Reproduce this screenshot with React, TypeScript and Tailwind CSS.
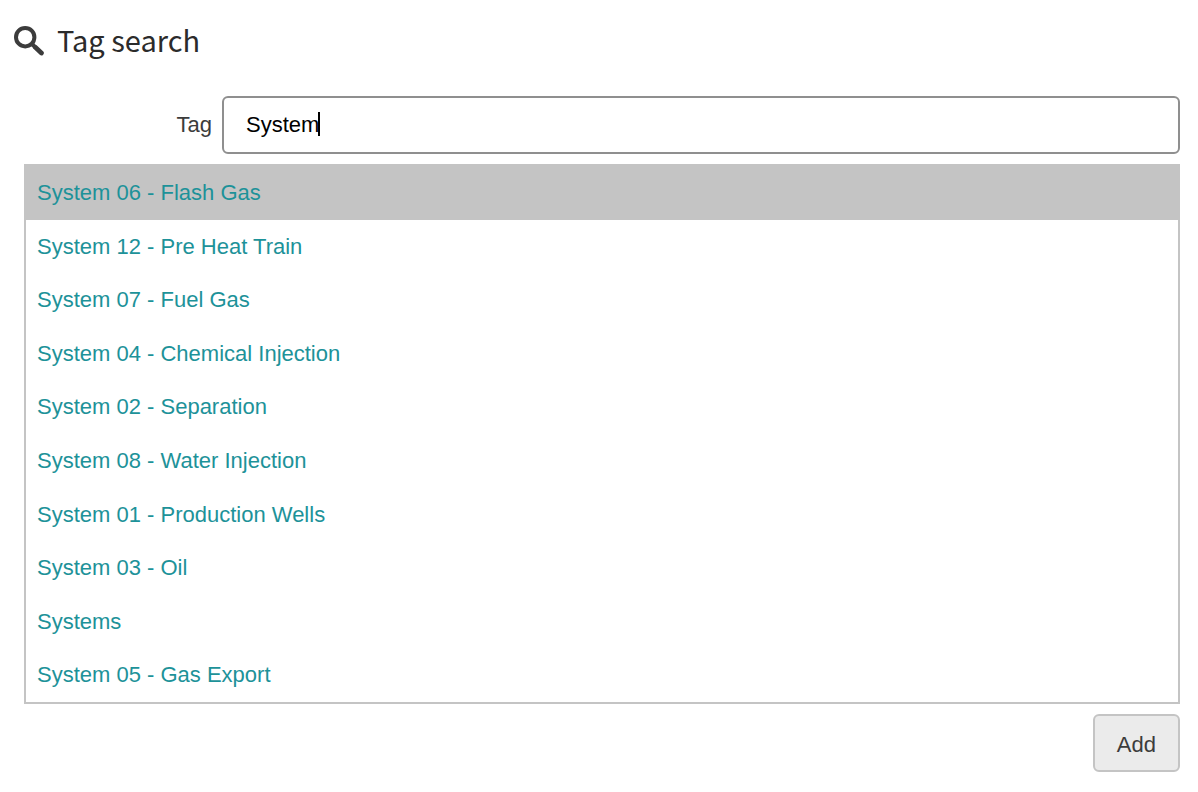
import { useState } from "react";

const suggestions = [
  "System 06 - Flash Gas",
  "System 12 - Pre Heat Train",
  "System 07 - Fuel Gas",
  "System 04 - Chemical Injection",
  "System 02 - Separation",
  "System 08 - Water Injection",
  "System 01 - Production Wells",
  "System 03 - Oil",
  "Systems",
  "System 05 - Gas Export",
];

function SearchIcon() {
  return (
    <svg viewBox="0 0 30 30" className="mt-1 w-[30px] h-[30px] shrink-0 text-[#3c3c3c]" fill="none" stroke="currentColor" aria-hidden="true">
      <circle cx="11.2" cy="11.2" r="9.2" strokeWidth="4" />
      <path d="M17.5 17.5l4 4" strokeWidth="4" />
      <path d="M21.6 21.6l5.8 5.4" strokeWidth="4.8" strokeLinecap="round" />
    </svg>
  );
}

export default function App() {
  const [tag, setTag] = useState("System");
  const [active, setActive] = useState(0);

  return (
    <main className="min-h-screen bg-white pt-4 pb-5 text-[22px] leading-8 text-[#3c3c3c] font-['Liberation_Sans',Arial,sans-serif]">
      <header className="flex items-center gap-[13px] px-3.5">
        <SearchIcon />
        <h1 className="text-[29px] leading-[46px] text-[#2b2b2b] font-['Noto_Sans_CJK_JP','Open_Sans',sans-serif]">Tag search</h1>
      </header>

      <form className="mt-[34px] pl-6 pr-[18px]" onSubmit={(e) => e.preventDefault()}>
        <div className="flex items-center gap-2.5">
          <label htmlFor="tag" className="w-[188px] text-right">
            Tag
          </label>
          <div className="relative flex-1">
            <input
              id="tag"
              type="text"
              autoComplete="off"
              value={tag}
              onChange={(e) => setTag(e.target.value)}
              className="peer block w-full h-[58px] px-[22px] rounded-md border-2 border-[#8f8f8f] bg-white text-black outline-none"
            />
            {/* Resting cursor, replaced by the native one on focus */}
            <span className="absolute left-24 top-4 w-0.5 h-6 bg-black pointer-events-none peer-focus:hidden" />
          </div>
        </div>

        <ul className="mt-2.5 min-h-[540px] flex flex-col border-2 border-[#c4c4c4]">
          {suggestions.map((name, i) => (
            <li key={name} className={`flex grow ${i === active ? "bg-[#c4c4c4]" : ""}`}>
              <a
                href="#tag"
                onMouseEnter={() => setActive(i)}
                onClick={() => setTag(name)}
                className="flex-1 px-[11px] pt-[11px] pb-2 text-[#1d9299]"
              >
                {name}
              </a>
            </li>
          ))}
        </ul>

        <div className="mt-2.5 flex justify-end">
          <button type="submit" className="h-[58px] px-[22px] pt-1 rounded-md border-2 border-[#c4c4c4] bg-[#ebebeb]">
            Add
          </button>
        </div>
      </form>
    </main>
  );
}
